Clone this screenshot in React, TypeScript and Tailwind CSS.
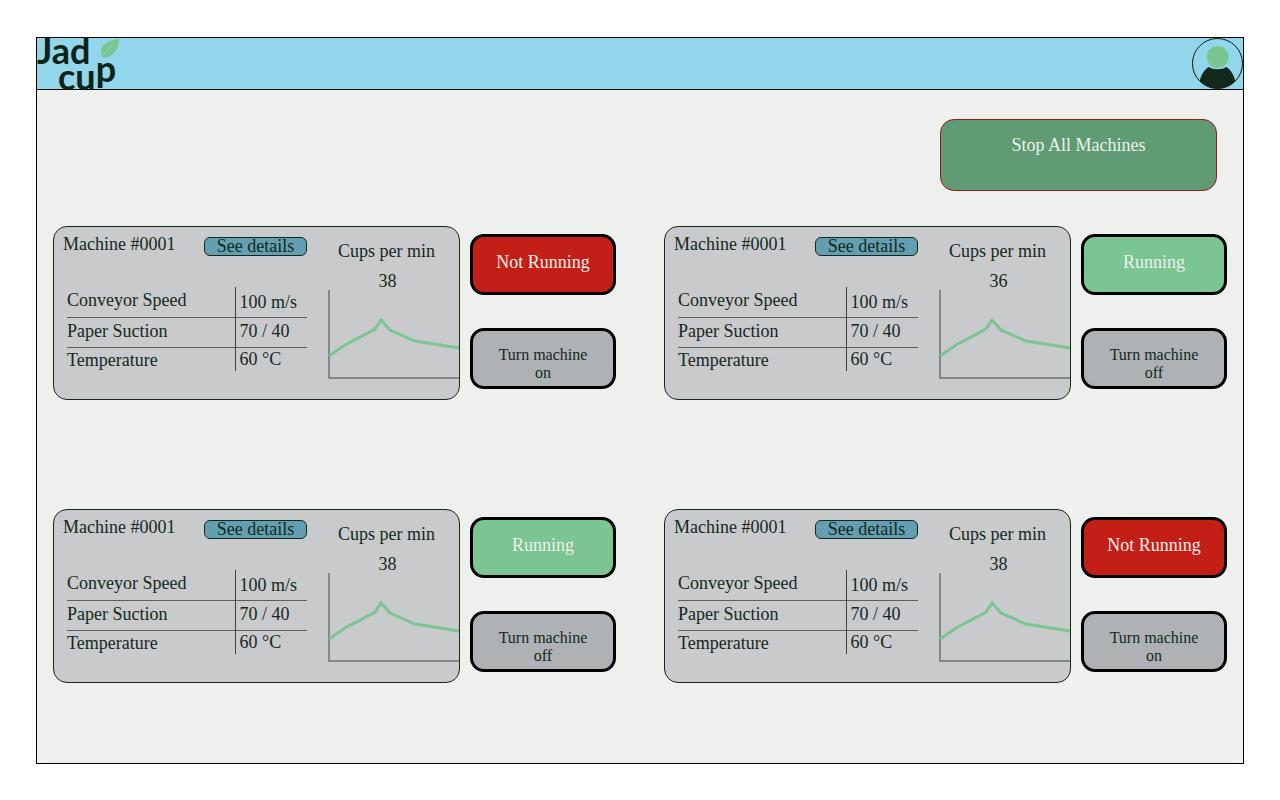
type Machine = {
  id: number;
  name: string;
  cups: number;
  running: boolean;
};

const machines: Machine[] = [
  { id: 1, name: "Machine #0001", cups: 38, running: false },
  { id: 2, name: "Machine #0001", cups: 36, running: true },
  { id: 3, name: "Machine #0001", cups: 38, running: true },
  { id: 4, name: "Machine #0001", cups: 38, running: false },
];

function Logo() {
  return (
    <a
      href="#"
      aria-label="Jad cup"
      className="relative block h-[51px] w-[84px] font-['Lato',sans-serif] text-[36px] leading-[25px] font-bold text-[#0c2417]"
    >
      <span className="block">Jad</span>
      <span className="block pl-[21px]">
        cu<span className="align-[8px] leading-[10px]">p</span>
      </span>
      <svg viewBox="0 0 20 20" className="absolute top-[1px] left-[63px] h-5 w-5" aria-hidden="true">
        <path d="M19 0C9 1 1 5 1 13c0 2 .5 4 1.500 5.500C10 19 19 13 19 0Z" fill="#7ac591" />
        <path d="M1 20C4 14 9 10 14 6" fill="none" stroke="#93d5eb" strokeWidth="0.6" />
      </svg>
    </a>
  );
}

function Avatar() {
  return (
    <button type="button" aria-label="Account" className="h-[51px] w-[51px]">
      <svg viewBox="0 0 51 51" className="h-full w-full" aria-hidden="true">
        <clipPath id="avatar-clip">
          <circle cx="25.500" cy="25.500" r="25" />
        </clipPath>
        <path
          d="M7 45C9 37 12 32 16.500 29C22 32 29 32 34.500 29C39 32 42 37 44 45V51H7Z"
          fill="#14291c"
          clipPath="url(#avatar-clip)"
        />
        <circle cx="25.500" cy="19" r="11" fill="#7ac591" />
        <circle cx="25.500" cy="25.500" r="25" fill="none" stroke="#0d1a12" />
      </svg>
    </button>
  );
}

function Readings() {
  return (
    <table className="mt-[31px] ml-[4px] w-60 border-collapse text-left">
      <tbody>
        <tr className="h-[30px] border-b border-[#5b5f5f]">
          <th scope="row" className="p-0 pb-[3px] font-normal">Conveyor Speed</th>
          <td className="w-[72px] border-l border-[#3c4240] p-0 pl-1">100 m/s</td>
        </tr>
        <tr className="h-[30px] border-b border-[#5b5f5f]">
          <th scope="row" className="p-0 pb-[3px] font-normal">Paper Suction</th>
          <td className="border-l border-[#3c4240] p-0 pb-[3px] pl-1">70 / 40</td>
        </tr>
        <tr className="h-6">
          <th scope="row" className="p-0 pt-[2px] font-normal">Temperature</th>
          <td className="border-l border-[#3c4240] p-0 pl-1">60 °C</td>
        </tr>
      </tbody>
    </table>
  );
}

function MachinePanel({ machine }: { machine: Machine }) {
  return (
    <section className="flex items-start gap-[10px]">
      <div className="flex h-[174px] flex-1 justify-between overflow-hidden rounded-[14px] border border-[#14291c] bg-[#c8cacc] text-lg leading-5">
        <div className="w-[253px] pt-[7px] pl-[9px]">
          <div className="flex items-start justify-between">
            <h2>{machine.name}</h2>
            <button
              type="button"
              className="mt-[3px] h-[19px] w-[103px] rounded-md border border-[#14291c] bg-[#639fb0] leading-[17px]"
            >
              See details
            </button>
          </div>
          <Readings />
        </div>
        <div className="w-[131px] pt-[14px]">
          <h3 className="pr-[14px] text-center">Cups per min</h3>
          <p className="mt-[10px] pr-3 text-center">{machine.cups}</p>
          <svg viewBox="0 0 131 89" className="-mt-px h-[89px] w-full" aria-hidden="true">
            <path d="M1 0V88H131" fill="none" stroke="#6e7071" strokeWidth="1.500" />
            <path
              d="M1 66L17 55L47 39L53 30L62 40L87 51L131 58"
              fill="none"
              stroke="#7ac591"
              strokeWidth="3"
            />
          </svg>
        </div>
      </div>
      <div className="flex w-[146px] flex-col gap-[33px] pt-2">
        <div
          className={
            machine.running
              ? "flex h-[61px] items-center justify-center rounded-[14px] border-3 border-black bg-[#7ac591] pb-[5px] text-lg text-[#eef0ed]"
              : "flex h-[61px] items-center justify-center rounded-[14px] border-3 border-black bg-[#c41f16] pb-[5px] text-lg text-[#eef0ed]"
          }
        >
          {machine.running ? "Running" : "Not Running"}
        </div>
        <button
          type="button"
          className="h-[61px] rounded-[14px] border-3 border-black bg-[#aeb2b5] px-5 pt-[10px] text-base leading-[18px]"
        >
          Turn machine {machine.running ? "off" : "on"}
        </button>
      </div>
    </section>
  );
}

export default function App() {
  return (
    <div className="flex min-h-screen flex-col bg-white px-9 pt-[37px] pb-9 font-['Liberation_Serif',serif] text-[#14291c]">
      <div className="flex-1 border border-black bg-[#eef0ed]">
        <header className="flex items-center justify-between border-b border-black bg-[#93d5eb]">
          <Logo />
          <Avatar />
        </header>
        <main className="px-4 pt-[29px]">
          <div className="flex justify-end pr-[10px]">
            <button
              type="button"
              className="h-[72px] w-[277px] rounded-[14px] border border-[#991b1b] bg-[#5f9c75] pb-5 text-lg text-[#eef0ed]"
            >
              Stop All Machines
            </button>
          </div>
          <div className="mt-[35px] grid grid-cols-2 gap-x-12 gap-y-[109px]">
            {machines.map((machine) => (
              <MachinePanel key={machine.id} machine={machine} />
            ))}
          </div>
        </main>
      </div>
    </div>
  );
}
